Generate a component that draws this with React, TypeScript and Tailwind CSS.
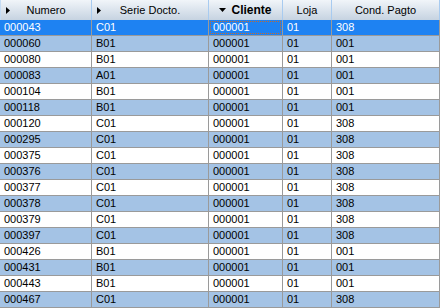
const cols = [
  { key: 'numero', label: 'Numero', w: 'w-[92px]', arrow: 'right' },
  { key: 'serie', label: 'Serie Docto.', w: 'w-[117px]', arrow: 'right' },
  { key: 'cliente', label: 'Cliente', w: 'w-[74px]', arrow: 'down' },
  { key: 'loja', label: 'Loja', w: 'w-[49px]', arrow: '' },
  { key: 'cond', label: 'Cond. Pagto', w: 'w-[108px]', arrow: '' },
];

const rows = [
  ['000043', 'C01', '000001', '01', '308'],
  ['000060', 'B01', '000001', '01', '001'],
  ['000080', 'B01', '000001', '01', '001'],
  ['000083', 'A01', '000001', '01', '001'],
  ['000104', 'B01', '000001', '01', '001'],
  ['000118', 'B01', '000001', '01', '001'],
  ['000120', 'C01', '000001', '01', '308'],
  ['000295', 'C01', '000001', '01', '308'],
  ['000375', 'C01', '000001', '01', '308'],
  ['000376', 'C01', '000001', '01', '308'],
  ['000377', 'C01', '000001', '01', '308'],
  ['000378', 'C01', '000001', '01', '308'],
  ['000379', 'C01', '000001', '01', '308'],
  ['000397', 'C01', '000001', '01', '308'],
  ['000426', 'B01', '000001', '01', '001'],
  ['000431', 'B01', '000001', '01', '001'],
  ['000443', 'B01', '000001', '01', '001'],
  ['000467', 'C01', '000001', '01', '308'],
];

function Arrow({ dir }: { dir: string }) {
  if (dir === 'right')
    return (
      <svg width="4" height="7" viewBox="0 0 4 7" className="absolute left-[5px] top-[7px]">
        <path d="M0 0 L4 3.5 L0 7 Z" fill="#000" />
      </svg>
    );
  return (
    <svg width="7" height="4" viewBox="0 0 7 4" className="mr-[5px]">
      <path d="M0 0 L7 0 L3.5 4 Z" fill="#000" />
    </svg>
  );
}

export default function App() {
  return (
    <div
      className="w-[440px] h-[308px] overflow-hidden bg-white text-[11px] text-black"
      style={{ fontFamily: '"Liberation Sans", Arial, sans-serif' }}
    >
      {/* Header */}
      <div className="flex h-[20px] bg-gradient-to-b from-[#f1f5f9] to-[#c6d3e1]">
        {cols.map((c) => (
          <div
            key={c.key}
            className={`${c.w} relative flex items-center justify-center border-r border-[#a8cbf0] first:border-l first:border-l-[#c4dcf5]`}
          >
            {c.arrow === 'right' && <Arrow dir="right" />}
            {c.arrow === 'down' && <Arrow dir="down" />}
            <span className={c.arrow === 'down' ? 'font-bold text-[12px]' : ''}>{c.label}</span>
          </div>
        ))}
      </div>

      {/* Rows */}
      {rows.map((r, i) => {
        const selected = i === 0;
        const bg = selected ? 'bg-[#1e82f2] text-white' : i % 2 === 1 ? 'bg-[#a4c3e5]' : 'bg-white';
        return (
          <div key={r[0]} className={`flex h-[16px] border-b border-[#9a9a9a] ${bg}`}>
            {r.map((v, j) => (
              <div
                key={j}
                className={`${cols[j].w} relative flex items-center pl-[4px] leading-none border-r border-[#9a9a9a]`}
              >
                {selected && j === 2 && (
                  <div className="absolute inset-[1px] border border-dotted border-[#c86a2a]" />
                )}
                {v}
              </div>
            ))}
          </div>
        );
      })}
    </div>
  );
}
